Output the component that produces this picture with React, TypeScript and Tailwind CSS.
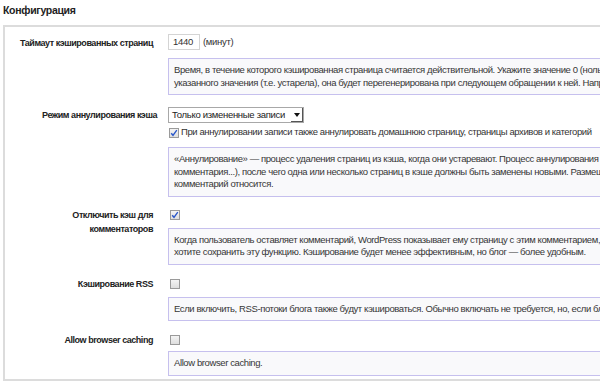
import React from "react";

const font = { fontFamily: '"Liberation Sans", Arial, sans-serif' };

function Checkbox({ checked }: { checked?: boolean }) {
  return (
    <div className="w-[10px] h-[10px] border border-[#9a9a9a] bg-gradient-to-b from-[#f4f4f4] to-[#dedede] flex items-center justify-center shrink-0">
      {checked && (
        <svg width="8" height="8" viewBox="0 0 8 8">
          <path d="M1.2 4.2 L3 6.3 L6.8 1.2" stroke="#2a57c9" strokeWidth="1.4" fill="none" />
        </svg>
      )}
    </div>
  );
}

function Desc({ lines, className = "" }: { lines: string[]; className?: string }) {
  return (
    <div className={`border border-[#c6c0ee] bg-[#f9f9fb] pl-[5px] py-[5px] text-[#363636] text-[9.5px] tracking-[-0.4px] leading-[12.5px] ${className}`}>
      {lines.map((l, i) => (
        <div key={i} className="whitespace-nowrap">{l}</div>
      ))}
    </div>
  );
}

function Row({ label, children, className = "" }: { label: React.ReactNode; children: React.ReactNode; className?: string }) {
  return (
    <div className={`flex ${className}`}>
      <div className="w-[148px] shrink-0 text-right font-bold text-[9px] tracking-[-0.45px] leading-[14px] text-[#222] whitespace-nowrap">{label}</div>
      <div className="ml-[15px] flex-1 min-w-0">{children}</div>
    </div>
  );
}

export default function App() {
  return (
    <div className="w-[600px] h-[383px] overflow-hidden bg-white relative" style={font}>
      <div className="pl-[3px] pt-[3px] h-[25px] font-bold text-[10.5px] tracking-[-0.3px] leading-[14px] text-[#222]">Конфигурация</div>
      <div className="ml-[3px] mr-[-300px] border-2 border-[#dcdcdc] h-[356px] pt-[7px]">
        <Row label={<div className="pt-[2px]">Таймаут кэшированных страниц</div>}>
          <div className="flex items-center h-[16px] text-[9.5px] tracking-[-0.3px] text-[#333]">
            <div className="w-[32px] h-[16px] border border-[#d4d4d4] bg-white pl-[4px] leading-[14px]">1440</div>
            <span className="ml-[3px]">(минут)</span>
          </div>
          <Desc
            className="mt-[8px]"
            lines={[
              "Время, в течение которого кэшированная страница считается действительной. Укажите значение 0 (ноль), чтобы кэшированные страницы не устаревали. По истечении",
              "указанного значения (т.е. устарела), она будет перегенерирована при следующем обращении к ней. Например, 3600 секунд.",
            ]}
          />
        </Row>
        <Row className="mt-[12px]" label={<div className="pt-[1px] mr-[-4px]">Режим аннулирования кэша</div>}>
          <div className="w-[136px] h-[16px] border border-[#a8a8a8] bg-white flex items-center text-[9.5px] tracking-[-0.3px] text-[#222]">
            <span className="pl-[3px] flex-1 whitespace-nowrap">Только измененные записи</span>
            <div className="w-[12px] h-[14px] flex items-center justify-center border-b border-r border-[#555]">
              <svg width="6" height="4" viewBox="0 0 6 4"><path d="M0 0 H6 L3 4 Z" fill="#111" /></svg>
            </div>
          </div>
          <div className="flex items-center mt-[3px] h-[13px] text-[9.5px] tracking-[-0.4px] text-[#333]">
            <div className="ml-[1px]"><Checkbox checked /></div>
            <span className="ml-[2px] whitespace-nowrap">При аннулировании записи также аннулировать домашнюю страницу, страницы архивов и категорий</span>
          </div>
          <Desc
            className="mt-[8px]"
            lines={[
              "«Аннулирование» — процесс удаления страниц из кэша, когда они устаревают. Процесс аннулирования запускается при изменениях в блоге (публикации записи, добавлении",
              "комментария...), после чего одна или несколько страниц в кэше должны быть заменены новыми. Размещение комментария удаляет из кэша только ту страницу, к которой",
              "комментарий относится.",
            ]}
          />
        </Row>
        <Row className="mt-[11px]" label={<div className="leading-[14px]">Отключить кэш для<br />комментаторов</div>}>
          <div className="h-[14px] flex items-center pl-[2px]"><Checkbox checked /></div>
          <Desc
            className="mt-[6px]"
            lines={[
              "Когда пользователь оставляет комментарий, WordPress показывает ему страницу с этим комментарием, а не кэшированную копию. Отключите эту опцию, если",
              "хотите сохранить эту функцию. Кэширование будет менее эффективным, но блог — более удобным.",
            ]}
          />
        </Row>
        <Row className="mt-[12px]" label="Кэширование RSS">
          <div className="h-[14px] flex items-center pl-[2px]"><Checkbox /></div>
          <Desc
            className="mt-[6px]"
            lines={["Если включить, RSS-потоки блога также будут кэшироваться. Обычно включать не требуется, но, если блог очень популярен, это может помочь."]}
          />
        </Row>
        <Row className="mt-[12px]" label="Allow browser caching">
          <div className="h-[14px] flex items-center pl-[2px]"><Checkbox /></div>
          <Desc className="mt-[4px]" lines={["Allow browser caching."]} />
        </Row>
      </div>
    </div>
  );
}
